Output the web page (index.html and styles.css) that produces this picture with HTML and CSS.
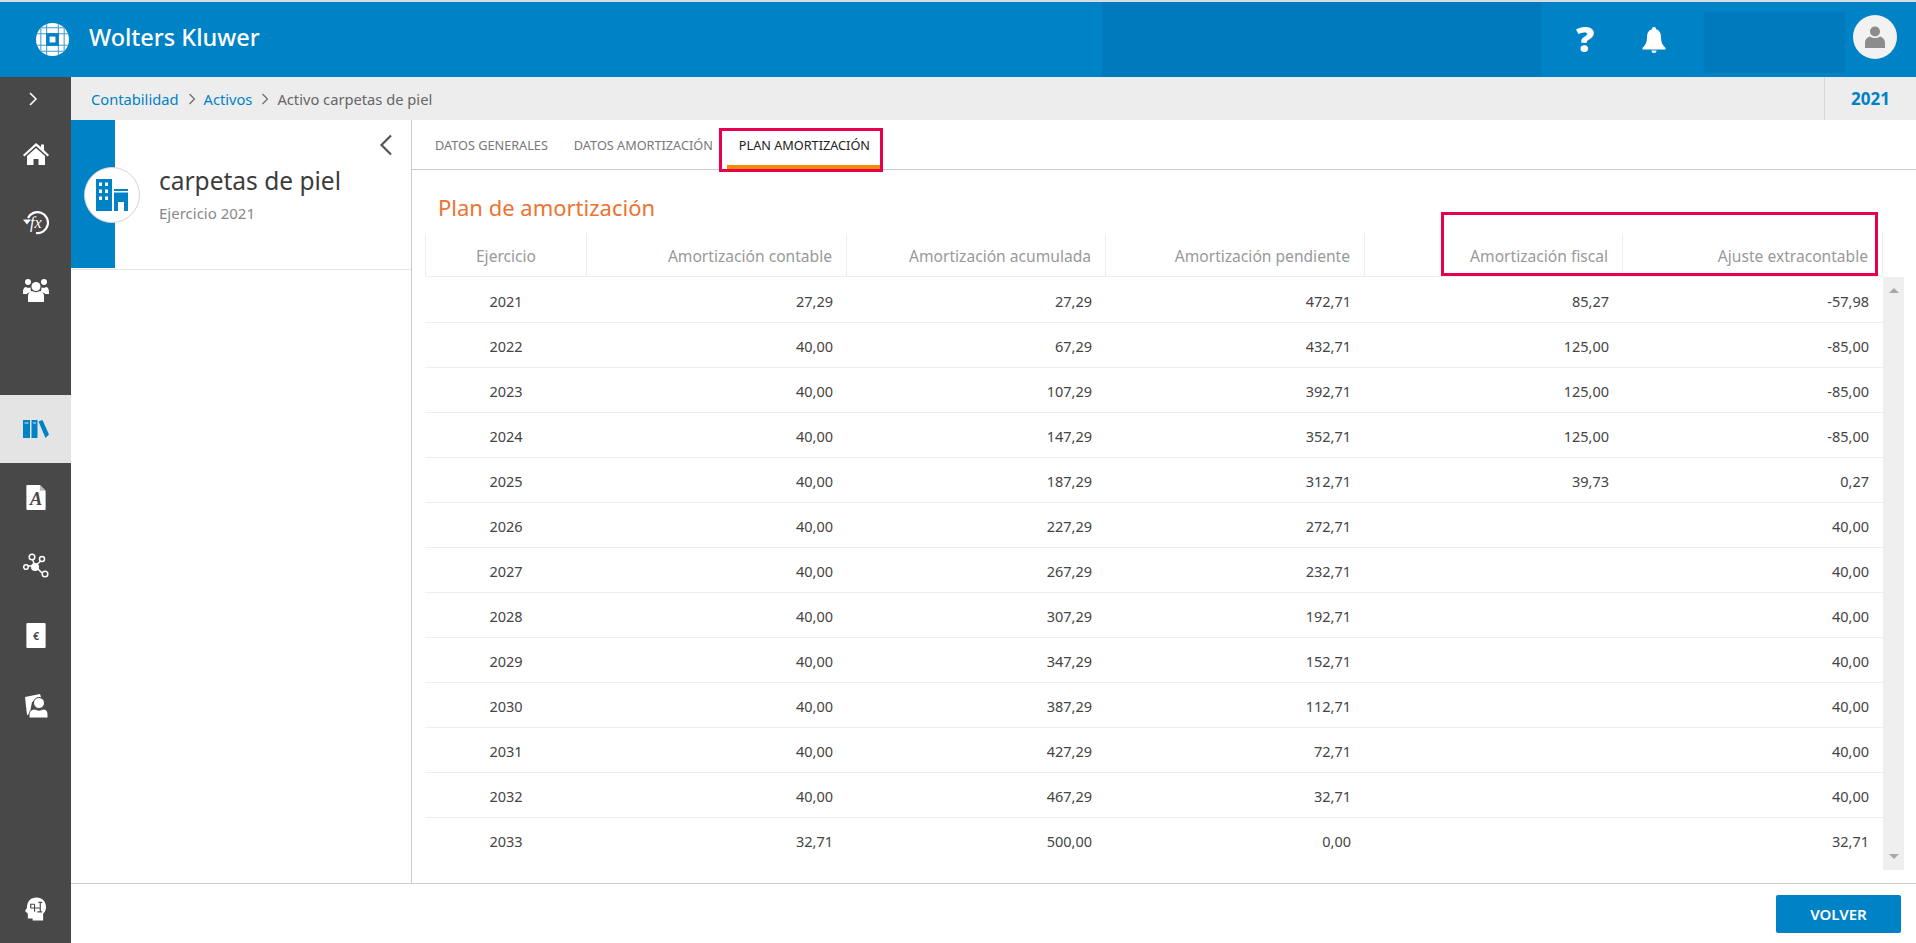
FILE: index.html
```html
<!DOCTYPE html>
<html lang="es">
<head>
  <meta charset="UTF-8">
  <meta name="viewport" content="width=device-width, initial-scale=1.0">
  <title>Plan de amortización</title>
  <link rel="stylesheet" href="styles.css">
</head>
<body>

  <!-- cabecera -->
  <header class="topbar">
    <svg class="logo" viewBox="0 0 36 36">
      <clipPath id="logo-clip"><circle cx="18" cy="18" r="17"/></clipPath>
      <circle cx="18" cy="18" r="17" fill="#fff"/>
      <g clip-path="url(#logo-clip)">
        <path d="M0 6h36M0 12h36M0 24h36M0 30h36M6 0v36M12 0v36M24 0v36M30 0v36" stroke="#3f9dd3" stroke-width="1.100"/>
        <rect x="11.500" y="11.500" width="13" height="13" fill="#0082c7"/>
        <rect x="15" y="15" width="6" height="6" fill="#fff"/>
      </g>
    </svg>
    <div class="brand">Wolters Kluwer</div>
    <div class="band"></div>
    <div class="top-icons">
      <span class="help">?</span>
      <svg class="bell" viewBox="0 0 24 26"><path d="M12 0a2 2 0 0 1 2 2.300c3.600 1 5 4 5 8 0 5 1.500 8 4.500 10.700v1.500h-23V21c3-2.700 4.500-5.700 4.500-10.700 0-4 1.400-7 5-8A2 2 0 0 1 12 0zM9.500 23.500h5a2.500 2.500 0 0 1-5 0z" fill="#fff"/></svg>
    </div>
    <div class="band-small"></div>
    <div class="avatar">
      <svg viewBox="0 0 20 22"><circle cx="10" cy="5.500" r="5"/><path d="M0 22v-5c0-4 3-6 5-6.500 3 2 7 2 10 0 2 .5 5 2.500 5 6.500v5z"/></svg>
    </div>
  </header>

  <div class="app">

    <!-- menu lateral -->
    <nav class="sidebar">
      <a class="side-toggle" href="#none">
        <svg viewBox="0 0 10 14"><path d="M2 1l6 6-6 6" fill="none" stroke="#fff" stroke-width="1.600"/></svg>
      </a>
      <a class="side-item" href="#none">
        <svg class="ic-home" viewBox="0 0 26 22"><path d="M13 0l5 4V1.500h3V7l5 5-1.300 1.500L13 3 1.300 13.500 0 12z"/><path d="M13 5l9 8v9h-6.500v-6h-5v6H4v-9z"/></svg>
      </a>
      <a class="side-item" href="#none">
        <svg class="ic-fx" viewBox="0 0 26 26"><path d="M5 9a10.500 10.500 0 1 1 8 15" fill="none" stroke="#fff" stroke-width="2.200"/><path d="M0 10.500h8l-4 5z"/><text x="7" y="19" class="fx-text">fx</text></svg>
      </a>
      <a class="side-item" href="#none">
        <svg class="ic-people" viewBox="0 0 26 24"><circle cx="5" cy="4" r="3"/><circle cx="21" cy="4" r="3"/><circle cx="13" cy="8.500" r="4.500"/><path d="M0 14c0-4 2-5 3-5 1 1 3 1 4.500 .5C7.600 11 8 12 8 13.500 5 15 4 15 4 16H0zM26 14c0-4-2-5-3-5-1 1-3 1-4.500 .5-.1 1.500-.5 2.500-.5 4 3 1.500 4 1.500 4 2.500h4z"/><path d="M5 24v-6c0-3 2-4.500 4-5 2.500 1.500 5.500 1.500 8 0 2 .5 4 2 4 5v6z"/></svg>
      </a>
      <div class="side-gap"></div>
      <a class="side-item is-active" href="#none">
        <svg class="ic-books" viewBox="0 0 26 18"><path d="M0 0h7v18H0zM8.500 0h6v18h-6zM15.500 1.500l4-1.500L26 14.500l-3.500 3.500z" fill="#0082c7"/><path d="M1.500 3h4M10 3h3" stroke="#e4e4e4" stroke-width="1"/></svg>
      </a>
      <a class="side-item" href="#none">
        <svg class="ic-doc" viewBox="0 0 20 26"><path d="M1 0h13l6 6v19a1 1 0 0 1-1 1H1a1 1 0 0 1-1-1V1a1 1 0 0 1 1-1z"/><path d="M14 0l6 6h-6z" fill="#bbb"/><text x="10" y="21" class="doc-text">A</text></svg>
      </a>
      <a class="side-item" href="#none">
        <svg class="ic-nodes" viewBox="0 0 26 27"><path d="M12 13L9 5M12 13l7-6M12 13H5M12 13l7 7" stroke="#fff" stroke-width="1.500"/><circle cx="12" cy="14" r="4"/><g fill="#484848" stroke="#fff" stroke-width="1.500"><circle cx="9" cy="4" r="2.800"/><circle cx="19" cy="6" r="2.500"/><circle cx="3" cy="14" r="2.300"/><circle cx="22" cy="21" r="2.800"/></g></svg>
      </a>
      <a class="side-item" href="#none">
        <svg class="ic-doc" viewBox="0 0 20 26"><rect width="20" height="26" rx="1"/><text x="10" y="18" class="euro-text">€</text></svg>
      </a>
      <a class="side-item" href="#none">
        <svg class="ic-contact" viewBox="0 0 24 26"><path d="M1 5l15-3 1 3-9 5-2 10-2 3H3z"/><circle cx="15" cy="11" r="5.500" stroke="#484848"/><path d="M5 26v-3c0-4 3-6 6-6 2 1.500 6 1.500 8 0 3 0 5 2 5 6v3z" stroke="#484848"/></svg>
      </a>
      <a class="side-item side-bottom" href="#none">
        <svg class="ic-brain" viewBox="0 0 22 24"><path d="M3 22v-5L0 14l2-3C2 4 6 0 12 0c6 0 10 4 10 10 0 4-2 6-3 7v7H8v-2z"/><path d="M6 11V7h4M16 5v10M6 11h10M10 7v8M13 15h5M14 5h4" fill="none" stroke="#484848" stroke-width="1.200"/></svg>
      </a>
    </nav>

    <div class="content">

      <div class="breadcrumb">
        <div class="crumbs">
          <a href="#none">Contabilidad</a>
          <span class="sep">
            <svg viewBox="0 0 8 12"><path d="M1.500 1l5 5-5 5" fill="none" stroke="#666" stroke-width="1.100"/></svg>
          </span>
          <a href="#none">Activos</a>
          <span class="sep">
            <svg viewBox="0 0 8 12"><path d="M1.500 1l5 5-5 5" fill="none" stroke="#666" stroke-width="1.100"/></svg>
          </span>
          <span>Activo carpetas de piel</span>
        </div>
        <div class="year">2021</div>
      </div>

      <div class="work">

        <aside class="side-panel">
          <a class="collapse" href="#none">
            <svg viewBox="0 0 14 22"><path d="M12 1.500L2.500 11l9.500 9.500" fill="none" stroke="#555" stroke-width="2.200"/></svg>
          </a>
          <div class="asset">
            <div class="asset-strip"></div>
            <div class="asset-icon">
              <svg viewBox="0 0 32 32"><path d="M0 0h16v32H0z" fill="#0082c7"/><path d="M18 10h14v2H18zM18 13.500h14V32h-4v-9h-6v9h-4z" fill="#0082c7"/><path d="M3 3.500h3v3.500H3zM9 3.500h3v3.500H9zM3 10.500h3V14H3zM9 10.500h3V14H9zM3 17.500h3V21H3zM9 17.500h3V21H9z" fill="#fff"/></svg>
            </div>
            <div class="asset-text">
              <div class="asset-name">carpetas de piel</div>
              <div class="asset-sub">Ejercicio 2021</div>
            </div>
          </div>
        </aside>

        <main class="detail">
          <ul class="tabs">
            <li><a href="#none" class="tab">DATOS GENERALES</a></li>
            <li><a href="#none" class="tab">DATOS AMORTIZACIÓN</a></li>
            <li><a href="#none" class="tab is-selected">PLAN AMORTIZACIÓN</a></li>
          </ul>

          <h2 class="section-title">Plan de amortización</h2>

          <div class="grid">
            <table class="plan plan-head">
              <colgroup><col class="c1"><col class="c2"><col class="c3"><col class="c4"><col class="c5"><col class="c6"></colgroup>
              <thead>
                <tr>
                  <th class="center">Ejercicio</th>
                  <th>Amortización contable</th>
                  <th>Amortización acumulada</th>
                  <th>Amortización pendiente</th>
                  <th>Amortización fiscal</th>
                  <th>Ajuste extracontable</th>
                </tr>
              </thead>
            </table>
            <div class="grid-body">
              <table class="plan plan-rows">
                <colgroup><col class="c1"><col class="c2"><col class="c3"><col class="c4"><col class="c5"><col class="c6"></colgroup>
                <tbody>
                  <tr><td class="center">2021</td><td>27,29</td><td>27,29</td><td>472,71</td><td>85,27</td><td>-57,98</td></tr>
                  <tr><td class="center">2022</td><td>40,00</td><td>67,29</td><td>432,71</td><td>125,00</td><td>-85,00</td></tr>
                  <tr><td class="center">2023</td><td>40,00</td><td>107,29</td><td>392,71</td><td>125,00</td><td>-85,00</td></tr>
                  <tr><td class="center">2024</td><td>40,00</td><td>147,29</td><td>352,71</td><td>125,00</td><td>-85,00</td></tr>
                  <tr><td class="center">2025</td><td>40,00</td><td>187,29</td><td>312,71</td><td>39,73</td><td>0,27</td></tr>
                  <tr><td class="center">2026</td><td>40,00</td><td>227,29</td><td>272,71</td><td></td><td>40,00</td></tr>
                  <tr><td class="center">2027</td><td>40,00</td><td>267,29</td><td>232,71</td><td></td><td>40,00</td></tr>
                  <tr><td class="center">2028</td><td>40,00</td><td>307,29</td><td>192,71</td><td></td><td>40,00</td></tr>
                  <tr><td class="center">2029</td><td>40,00</td><td>347,29</td><td>152,71</td><td></td><td>40,00</td></tr>
                  <tr><td class="center">2030</td><td>40,00</td><td>387,29</td><td>112,71</td><td></td><td>40,00</td></tr>
                  <tr><td class="center">2031</td><td>40,00</td><td>427,29</td><td>72,71</td><td></td><td>40,00</td></tr>
                  <tr><td class="center">2032</td><td>40,00</td><td>467,29</td><td>32,71</td><td></td><td>40,00</td></tr>
                  <tr><td class="center">2033</td><td>32,71</td><td>500,00</td><td>0,00</td><td></td><td>32,71</td></tr>
                </tbody>
              </table>
              <div class="scroll">
                <span class="arrow-up"></span>
                <span class="arrow-down"></span>
              </div>
            </div>
            <!-- recuadro rojo de la captura -->
            <div class="mark mark-cols"></div>
          </div>

          <div class="mark mark-tab"></div>
        </main>
      </div>

      <footer class="actions">
        <button type="button" class="btn">VOLVER</button>
      </footer>
    </div>
  </div>

</body>
</html>
```

FILE: styles.css
```css
* {
  box-sizing: border-box;
}

html, body {
  height: 100%;
}

body {
  margin: 0;
  display: flex;
  flex-direction: column;
  overflow: hidden;
  background: white;
  color: #444;
  font-family: "Noto Sans", "Liberation Sans", sans-serif;
}

a {
  text-decoration: none;
}

/* cabecera */
.topbar {
  flex: none;
  display: flex;
  height: 77px;
  padding-right: 19px;
  border-top: 2px solid #d5dde2;
  background: #0082c7;
  color: white;
}

.logo {
  width: 35px;
  height: 35px;
  margin: 20px 0 0 35px;
}

.brand {
  flex: 1;
  margin: 17px 0 0 19px;
  font-size: 23.500px;
  line-height: 36px;
  font-weight: 500;
}

.band {
  width: 439px;
  background: #007abd;
}

.top-icons {
  width: 163px;
  display: flex;
  align-items: flex-start;
}

.help {
  margin: 15px 0 0 35px;
  font-size: 36px;
  line-height: 44px;
  font-weight: 800;
  font-family: "Open Sans", sans-serif;
}

.bell {
  width: 24px;
  height: 26px;
  margin: 25px 0 0 48px;
}

.band-small {
  width: 141px;
  height: 61px;
  margin-top: 10px;
  background: #007abd;
}

.avatar {
  width: 44px;
  height: 44px;
  margin: 13px 0 0 8px;
  display: flex;
  align-items: center;
  justify-content: center;
  border-radius: 50%;
  background: #f2f2f2;
}

.avatar svg {
  width: 20px;
  height: 22px;
  fill: #8c8c8c;
}

.app {
  flex: 1;
  display: flex;
  min-height: 0;
}

/* menu lateral */
.sidebar {
  flex: none;
  width: 71px;
  display: flex;
  flex-direction: column;
  background: #484848;
}

.side-toggle {
  height: 43px;
  padding-right: 5px;
  display: flex;
  align-items: center;
  justify-content: center;
}

.side-toggle svg {
  width: 10px;
  height: 14px;
}

.side-item {
  flex: none;
  height: 68px;
  display: flex;
  align-items: center;
  justify-content: center;
}

.side-item svg {
  fill: white;
}

.side-gap {
  height: 71px;
}

.side-item.is-active {
  background: #e4e4e4;
}

.side-item.is-active ~ .side-item {
  height: 69px;
}

.side-item.side-bottom {
  margin-top: auto;
}

.ic-home { width: 26px; height: 22px; }
.ic-fx { width: 26px; height: 26px; }
.ic-people { width: 26px; height: 24px; }
.ic-books { width: 26px; height: 18px; }
.ic-doc { width: 20px; height: 25px; }
.ic-nodes { width: 26px; height: 27px; }
.ic-contact { width: 24px; height: 26px; }
.ic-brain { width: 21px; height: 24px; }

.fx-text {
  font: italic 16px "Liberation Serif", serif;
  fill: white;
}

.doc-text {
  font: italic 700 19px "Liberation Serif", serif;
  fill: #484848;
  text-anchor: middle;
}

.euro-text {
  font: 700 11px "Noto Sans", sans-serif;
  fill: #484848;
  text-anchor: middle;
}

.content {
  flex: 1;
  min-width: 0;
  display: flex;
  flex-direction: column;
}

/* migas */
.breadcrumb {
  flex: none;
  height: 43px;
  display: flex;
  align-items: center;
  justify-content: space-between;
  background: #ededed;
  font-size: 14.700px;
}

.crumbs {
  display: flex;
  align-items: center;
  padding-left: 20px;
  color: #666;
}

.crumbs a {
  color: #0082c7;
}

.sep {
  display: flex;
  margin: 0 8px 0 9px;
}

.sep svg {
  width: 8px;
  height: 12px;
}

.year {
  width: 92px;
  height: 100%;
  display: flex;
  align-items: center;
  justify-content: center;
  border-left: 1px solid #d8d8d8;
  color: #0082c7;
  font-size: 17px;
  font-weight: 700;
}

.work {
  flex: 1;
  display: flex;
  min-height: 0;
}

/* panel izquierdo */
.side-panel {
  position: relative;
  flex: none;
  width: 341px;
  border-right: 1px solid #ccc;
}

.collapse {
  position: absolute;
  top: 14px;
  right: 18px;
}

.collapse svg {
  display: block;
  width: 14px;
  height: 22px;
}

.asset {
  height: 150px;
  display: flex;
  align-items: center;
  border-bottom: 1px solid #e6e6e6;
}

.asset-strip {
  flex: none;
  width: 44px;
  height: 148px;
  align-self: flex-start;
  background: #0082c7;
}

.asset-icon {
  flex: none;
  width: 56px;
  height: 56px;
  margin: 0 19px 0 -31px;
  display: flex;
  align-items: center;
  justify-content: center;
  border: 1px solid #d4d4d4;
  border-radius: 50%;
  background: white;
}

.asset-icon svg {
  width: 32px;
  height: 32px;
}

.asset-text {
  margin-top: 2px;
}

.asset-name {
  font-size: 24.500px;
  line-height: 34px;
  color: #3c3c3c;
}

.asset-sub {
  font-size: 15px;
  line-height: 30px;
  color: #888;
}

/* detalle */
.detail {
  position: relative;
  flex: 1;
  min-width: 0;
}

.tabs {
  display: flex;
  gap: 2px;
  height: 50px;
  margin: 0;
  padding: 0 0 0 11px;
  list-style: none;
  border-bottom: 1px solid #ccc;
}

.tab {
  display: block;
  height: 49px;
  padding: 15px 12px 0;
  font-size: 12.700px;
  line-height: 20px;
  color: #777;
}

.tab.is-selected {
  color: #222;
  border-bottom: 4px solid #f28c00;
}

.section-title {
  height: 63px;
  margin: 0;
  padding: 21px 0 0 26px;
  font-size: 22px;
  line-height: 32px;
  font-weight: 400;
  color: #ee7230;
}

.grid {
  position: relative;
  width: 1479px;
  margin-left: 13px;
}

.plan {
  width: 1458px;
  border-collapse: separate;
  border-spacing: 0;
  table-layout: fixed;
}

.c1 { width: 162px; }
.c2 { width: 260px; }
.c3 { width: 259px; }
.c4 { width: 259px; }
.c5 { width: 258px; }
.c6 { width: 260px; }

.plan th {
  height: 44px;
  padding: 0 14px 8px;
  vertical-align: bottom;
  text-align: right;
  border-right: 1px solid #eee;
  border-bottom: 1px solid #eee;
  font-size: 15.600px;
  line-height: 24px;
  font-weight: 400;
  color: #999;
}

.plan th:first-child {
  border-left: 1px solid #eee;
}

.plan th.center, .plan td.center {
  text-align: center;
}

.plan-rows {
  margin-top: 1px;
}

.plan td {
  height: 45px;
  padding: 1px 14px 0;
  text-align: right;
  border-bottom: 1px solid #eee;
  font-size: 14.500px;
  color: #444;
}

.plan tr:last-child td {
  border-bottom: 0;
}

.grid-body {
  display: flex;
  align-items: flex-start;
}

.scroll {
  width: 21px;
  height: 593px;
  display: flex;
  flex-direction: column;
  justify-content: space-between;
  align-items: center;
  padding: 11px 0;
  background: #efefef;
}

.arrow-up, .arrow-down {
  width: 0;
  height: 0;
  border-left: 5px solid transparent;
  border-right: 5px solid transparent;
}

.arrow-up {
  border-bottom: 5px solid #a8a8a8;
}

.arrow-down {
  border-top: 5px solid #a8a8a8;
}

/* recuadros rojos */
.mark {
  position: absolute;
  border: 3px solid #e8004c;
}

.mark-cols {
  top: -21px;
  left: 1016px;
  width: 437px;
  height: 64px;
}

.mark-tab {
  top: 8px;
  left: 307px;
  width: 164px;
  height: 44px;
}

/* pie */
.actions {
  flex: none;
  height: 60px;
  display: flex;
  justify-content: flex-end;
  padding: 11px 15px 0 0;
  border-top: 1px solid #ccc;
}

.btn {
  width: 125px;
  height: 38px;
  border: 0;
  border-radius: 2px;
  background: #0082c7;
  color: white;
  font-family: inherit;
  font-size: 15px;
  font-weight: 600;
  cursor: pointer;
}
```
